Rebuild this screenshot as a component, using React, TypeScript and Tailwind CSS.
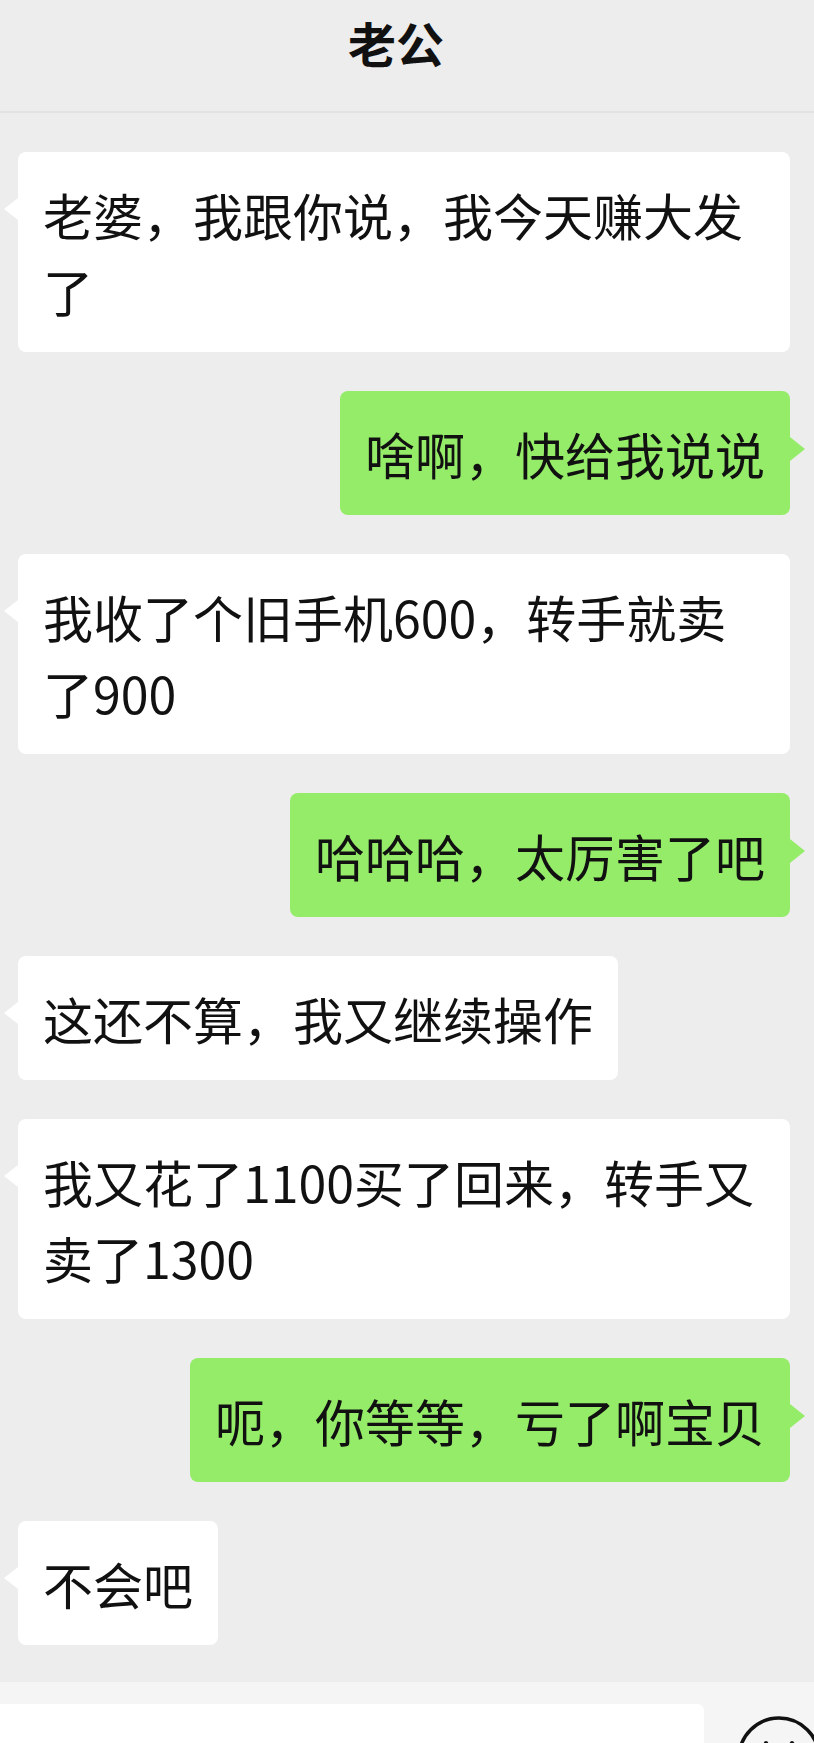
import React from "react";

type Msg = { self: boolean; text: string };

const messages: Msg[] = [
  { self: false, text: "老婆，我跟你说，我今天赚大发了" },
  { self: true, text: "啥啊，快给我说说" },
  { self: false, text: "我收了个旧手机600，转手就卖了900" },
  { self: true, text: "哈哈哈，太厉害了吧" },
  { self: false, text: "这还不算，我又继续操作" },
  { self: false, text: "我又花了1100买了回来，转手又卖了1300" },
  { self: true, text: "呃，你等等，亏了啊宝贝" },
  { self: false, text: "不会吧" },
];

function Bubble({ self, text }: Msg) {
  return (
    <div className={self ? "flex justify-end" : "flex justify-start"}>
      <div
        className={
          self
            ? "relative max-w-[772px] rounded-[8px] bg-[#95ec69] px-[25px] py-[24px] text-[50px] leading-[76px] text-[#111111]"
            : "relative max-w-[772px] rounded-[8px] bg-white px-[25px] py-[24px] text-[50px] leading-[76px] text-[#111111]"
        }
      >
        {self ? (
          <span className="absolute right-[-15px] top-[46px] h-0 w-0 border-y-[12px] border-l-[15px] border-y-transparent border-l-[#95ec69]" />
        ) : (
          <span className="absolute left-[-14px] top-[46px] h-0 w-0 border-y-[11px] border-r-[14px] border-y-transparent border-r-white" />
        )}
        {text}
      </div>
    </div>
  );
}

export default function App() {
  return (
    <div
      className="flex h-[1743px] w-[814px] flex-col overflow-hidden bg-[#ededed]"
      style={{ fontFamily: '"Noto Sans CJK SC", "Noto Sans", sans-serif' }}
    >
      <div className="h-[113px] shrink-0 border-b-2 border-[#e2e2e2] bg-[#ededed] pr-[22px] pt-[16px] text-center">
        <div className="text-[48px] font-bold leading-[52px] text-[#111111]">老公</div>
      </div>
      <div className="flex flex-1 flex-col gap-[39px] pl-[18px] pr-[24px] pt-[39px]">
        {messages.map((m, i) => (
          <Bubble key={i} self={m.self} text={m.text} />
        ))}
      </div>
      <div className="flex h-[61px] shrink-0 items-start bg-[#f5f5f5] pt-[22px]">
        <div className="h-[60px] w-[704px] shrink-0 rounded-tr-[6px] bg-white" />
        <div className="ml-[33px] mt-[12px] h-[84px] w-[84px] shrink-0">
          <svg width="84" height="84" viewBox="0 0 84 84" fill="none">
            <circle cx="42" cy="42" r="40" stroke="#111111" strokeWidth="3.5" />
            <ellipse cx="29" cy="29" rx="2.5" ry="4" fill="#111111" />
            <ellipse cx="55" cy="29" rx="2.5" ry="4" fill="#111111" />
          </svg>
        </div>
      </div>
    </div>
  );
}
